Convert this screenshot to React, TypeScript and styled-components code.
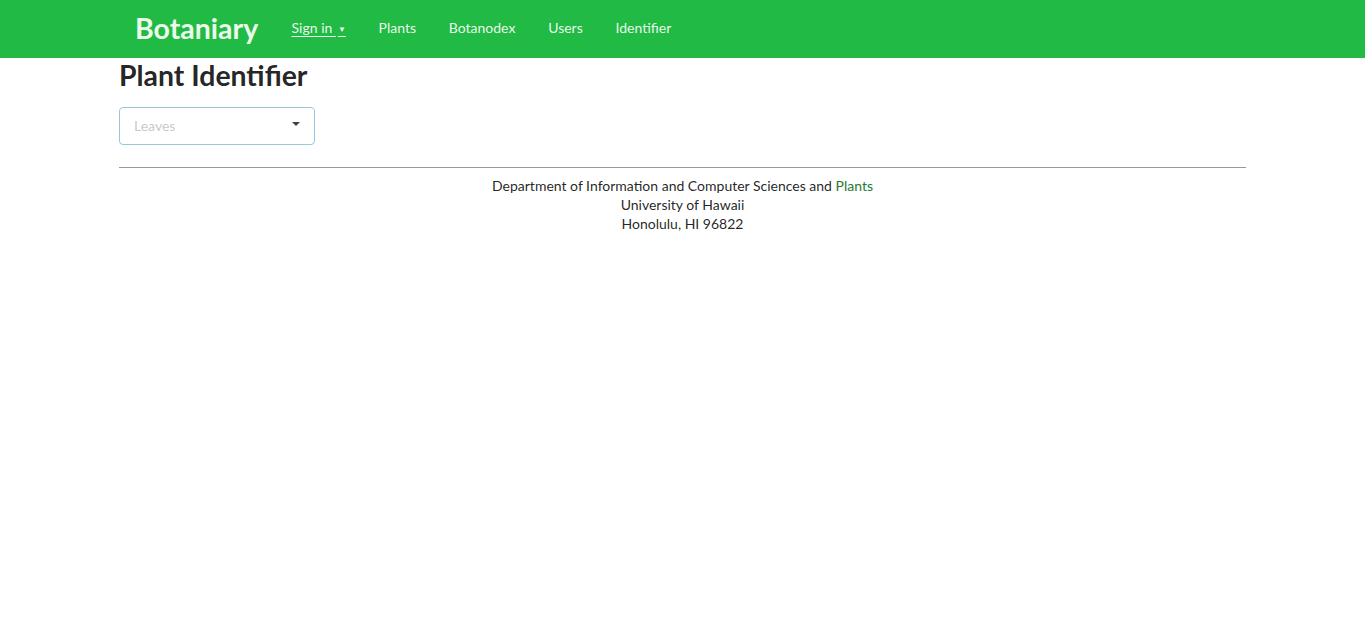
import React from "react";
import styled, { createGlobalStyle } from "styled-components";

const Global = createGlobalStyle`
  html, body { margin: 0; padding: 0; background: #fff; }
  body {
    font-family: Lato, "Helvetica Neue", Arial, sans-serif;
    font-size: 14px;
    line-height: 1.4285em;
    color: rgba(0, 0, 0, 0.87);
  }
  * { box-sizing: border-box; }
`;

const NavBar = styled.nav`
  background: #21ba45;
  height: 58px;
  display: flex;
  justify-content: center;
`;

const NavInner = styled.div`
  width: 1127px;
  display: flex;
  align-items: center;
  padding-bottom: 2px;
`;

const Brand = styled.a`
  padding: 0 17px 0 16px;
  font-size: 28.5px;
  font-weight: 700;
  color: #ecfbe9;
  text-decoration: none;
  line-height: 1;
`;

const NavItem = styled.a<{ $underline?: boolean }>`
  padding: 13px 16.4px;
  font-size: 14px;
  color: rgba(255, 255, 255, 0.92);
  text-decoration: ${(p) => (p.$underline ? "underline" : "none")};
  text-underline-offset: 3px;
  white-space: pre;
`;

const Caret = styled.span`
  font-size: 8px;
  margin-left: 2px;
  vertical-align: 1px;
`;

const Container = styled.main`
  width: 1127px;
  margin: 0 auto;
`;

const Title = styled.h1`
  font-size: 28.4px;
  font-weight: 700;
  line-height: 36px;
  margin: -1px 0 14px;
  color: rgba(0, 0, 0, 0.87);
`;

const Dropdown = styled.div`
  width: 196px;
  height: 38px;
  border: 1px solid #96c8da;
  border-radius: 4px;
  display: flex;
  align-items: center;
  justify-content: space-between;
  padding: 0 14px 0 14px;
  color: rgba(191, 191, 191, 0.87);
`;

const DropIcon = styled.span`
  width: 0;
  height: 0;
  border-left: 4px solid transparent;
  border-right: 4px solid transparent;
  border-top: 4px solid rgba(0, 0, 0, 0.75);
  margin-top: -5px;
`;

const Rule = styled.hr`
  border: none;
  border-top: 1px solid #999;
  margin: 22px 0 8px;
`;

const Footer = styled.footer`
  text-align: center;
  font-size: 14px;
  line-height: 19px;
  color: rgba(0, 0, 0, 0.87);
`;

const GreenLink = styled.a`
  color: #1e7b33;
  text-decoration: none;
`;

export default function App() {
  return (
    <>
      <Global />
      <NavBar>
        <NavInner>
          <Brand>Botaniary</Brand>
          <NavItem $underline>
            Sign in <Caret>▼</Caret>
          </NavItem>
          <NavItem>Plants</NavItem>
          <NavItem>Botanodex</NavItem>
          <NavItem>Users</NavItem>
          <NavItem>Identifier</NavItem>
        </NavInner>
      </NavBar>
      <Container>
        <Title>Plant Identifier</Title>
        <Dropdown>
          <span>Leaves</span>
          <DropIcon />
        </Dropdown>
        <Rule />
        <Footer>
          <div>
            Department of Information and Computer Sciences and <GreenLink>Plants</GreenLink>
          </div>
          <div>University of Hawaii</div>
          <div>Honolulu, HI 96822</div>
        </Footer>
      </Container>
    </>
  );
}
